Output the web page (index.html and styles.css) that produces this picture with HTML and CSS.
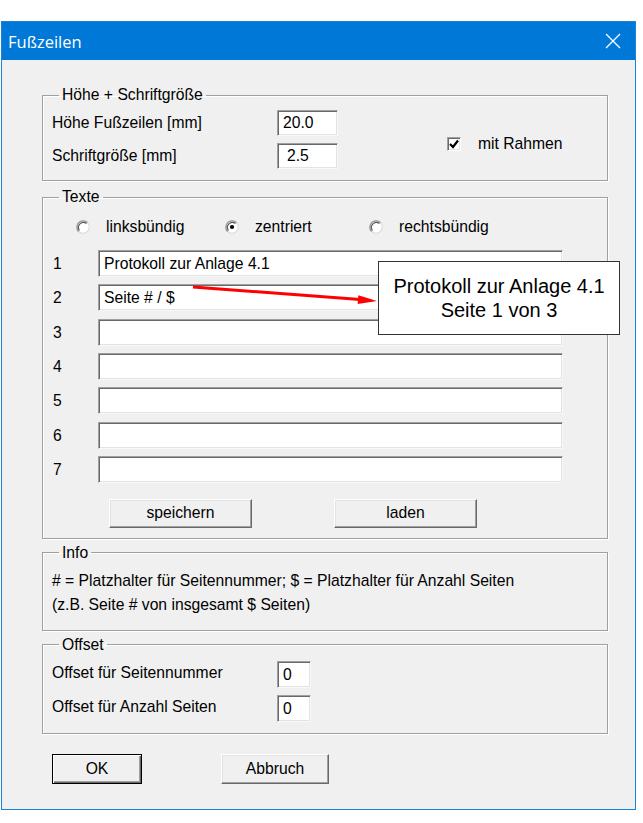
FILE: index.html
```html
<!DOCTYPE html>
<html lang="de">
<head>
<meta charset="utf-8">
<title>Fußzeilen</title>
<link rel="stylesheet" href="styles.css">
</head>
<body>
<div class="window">
  <div class="titlebar">
    <span class="title">Fußzeilen</span>
    <svg class="close" width="16" height="16" viewBox="0 0 16 16"><path d="M1 1 L15 15 M15 1 L1 15" stroke="#fff" stroke-width="1.3" fill="none"/></svg>
  </div>
  <div class="client">
    <fieldset class="group g-size">
      <legend>Höhe + Schriftgröße</legend>
      <div class="size-grid">
        <span class="lbl">Höhe Fußzeilen [mm]</span>
        <div class="field w61">20.0</div>
        <div class="check">
          <span class="cbox"><svg width="10" height="10" viewBox="0 0 10 10"><path d="M1 5 L4 8 L9 1.5" stroke="#000" stroke-width="2.2" fill="none"/></svg></span>
          <span>mit Rahmen</span>
        </div>
        <span class="lbl">Schriftgröße [mm]</span>
        <div class="field w61 indent">2.5</div>
      </div>
    </fieldset>

    <fieldset class="group g-texts">
      <legend>Texte</legend>
      <div class="radios">
        <div class="radio"><svg width="14" height="14" viewBox="0 0 14 14"><circle cx="7" cy="7" r="6.3" fill="#fff" stroke="#dcdcdc" stroke-width="1.2"/><path d="M2.55 11.45 A6.3 6.3 0 0 1 11.45 2.55" stroke="#9a9a9a" fill="none" stroke-width="1.4"/><path d="M3.5 10.5 A5 5 0 0 1 10.5 3.5" stroke="#555" fill="none" stroke-width="1.1"/></svg><span>linksbündig</span></div>
        <div class="radio"><svg width="14" height="14" viewBox="0 0 14 14"><circle cx="7" cy="7" r="6.3" fill="#fff" stroke="#dcdcdc" stroke-width="1.2"/><path d="M2.55 11.45 A6.3 6.3 0 0 1 11.45 2.55" stroke="#9a9a9a" fill="none" stroke-width="1.4"/><path d="M3.5 10.5 A5 5 0 0 1 10.5 3.5" stroke="#555" fill="none" stroke-width="1.1"/><circle cx="7" cy="7" r="2.1" fill="#000"/></svg><span>zentriert</span></div>
        <div class="radio"><svg width="14" height="14" viewBox="0 0 14 14"><circle cx="7" cy="7" r="6.3" fill="#fff" stroke="#dcdcdc" stroke-width="1.2"/><path d="M2.55 11.45 A6.3 6.3 0 0 1 11.45 2.55" stroke="#9a9a9a" fill="none" stroke-width="1.4"/><path d="M3.5 10.5 A5 5 0 0 1 10.5 3.5" stroke="#555" fill="none" stroke-width="1.1"/></svg><span>rechtsbündig</span></div>
      </div>
      <div class="rows">
        <span class="num">1</span><div class="field">Protokoll zur Anlage 4.1</div>
        <span class="num">2</span><div class="field">Seite # / $</div>
        <span class="num">3</span><div class="field"></div>
        <span class="num">4</span><div class="field"></div>
        <span class="num">5</span><div class="field"></div>
        <span class="num">6</span><div class="field"></div>
        <span class="num">7</span><div class="field"></div>
      </div>
      <div class="btnrow">
        <button class="btn wide">speichern</button>
        <button class="btn wide">laden</button>
      </div>
    </fieldset>

    <fieldset class="group g-info">
      <legend>Info</legend>
      <p class="info">#&nbsp;= Platzhalter für Seitennummer; $ = Platzhalter für Anzahl Seiten</p>
      <p class="info">(z.B. Seite # von insgesamt $ Seiten)</p>
    </fieldset>

    <fieldset class="group g-offset">
      <legend>Offset</legend>
      <div class="offset-grid">
        <span class="lbl">Offset für Seitennummer</span>
        <div class="field">0</div>
        <span class="lbl">Offset für Anzahl Seiten</span>
        <div class="field">0</div>
      </div>
    </fieldset>

    <div class="actions">
      <button class="btn default ok">OK</button>
      <button class="btn cancel">Abbruch</button>
    </div>
  </div>

  <svg class="arrow" width="192" height="24" viewBox="0 0 192 24"><line x1="3" y1="3" x2="170" y2="15.6" stroke="#f00" stroke-width="3"/><polygon points="187,17 168.3,11.2 167.7,20" fill="#f00"/></svg>
  <div class="callout">
    <span>Protokoll zur Anlage 4.1</span>
    <span>Seite 1 von 3</span>
  </div>
</div>
</body>
</html>
```
FILE: styles.css
```css
* { box-sizing: border-box; }
html, body { margin: 0; padding: 0; background: #fff; }
body {
  font-family: "Liberation Sans", Arial, sans-serif;
  font-size: 15.7px;
  color: #000;
}
.window {
  position: relative;
  margin: 21px 0 0 1px;
  width: 635px;
  height: 789px;
  border: 1px solid #1883d7;
  background: #f0f0f0;
  display: flex;
  flex-direction: column;
}
.titlebar {
  height: 38px;
  flex: none;
  background: #0078d7;
  color: #fff;
  display: flex;
  align-items: center;
  justify-content: space-between;
  padding: 0 14px 0 6px;
}
.title {
  font-family: "Open Sans", "Noto Sans", sans-serif;
  font-size: 16.5px;
}
.client {
  flex: 1;
  padding: 0 27px 0 40px;
}
.group {
  margin: 0;
  padding: 0 0 0 9px;
  min-width: 0;
  border: 1px solid #a0a0a0;
  box-shadow: inset 1px 1px #fff, 1px 1px #fff;
}
.group legend {
  margin-left: 7px;
  padding: 0 3px;
  line-height: 18px;
  height: 18px;
}
.g-size { margin-top: 26px; padding-top: 6px; padding-bottom: 11px; }
.g-texts { margin-top: 7px; padding-top: 11px; padding-bottom: 10px; }
.g-info { margin-top: 5px; padding-top: 7px; padding-bottom: 13px; }
.g-offset { margin-top: 5px; padding-top: 7px; padding-bottom: 11px; }

.field {
  height: 27px;
  background: #fff;
  border: 1px solid;
  border-color: #a0a0a0 #f8f8f8 #f8f8f8 #a0a0a0;
  box-shadow: inset 1px 1px #696969, inset -1px -1px #e3e3e3;
  padding: 0 5px;
  line-height: 25px;
  white-space: nowrap;
  overflow: hidden;
}
.lbl { line-height: 26px; }

.size-grid {
  display: grid;
  grid-template-columns: 225px 61px 1fr;
  grid-template-rows: 26px 26px;
  row-gap: 7px;
}
.size-grid .field { height: 26px; line-height: 24px; }
.size-grid .indent { padding-left: 9px; }
.check {
  grid-column: 3;
  grid-row: 1 / span 2;
  align-self: center;
  display: flex;
  align-items: center;
  gap: 17px;
  margin-left: 109px;
  margin-top: 9px;
}
.cbox {
  width: 14px;
  height: 14px;
  background: #fff;
  border: 1px solid;
  border-color: #a0a0a0 #fff #fff #a0a0a0;
  box-shadow: inset 1px 1px #696969, inset -1px -1px #e3e3e3;
  display: flex;
  align-items: center;
  justify-content: center;
}

.radios {
  display: grid;
  grid-template-columns: 149px 144px auto;
  padding-left: 24px;
  height: 20px;
  align-items: center;
}
.radio {
  display: flex;
  align-items: center;
  gap: 16px;
}
.radio svg { display: block; }

.rows {
  margin-top: 13px;
  display: grid;
  grid-template-columns: 46px 465px;
  grid-auto-rows: 27px;
  row-gap: 7.33px;
}
.num { line-height: 27px; padding-left: 1px; }

.btnrow {
  margin-top: 16px;
  padding-left: 57px;
  display: flex;
  gap: 82px;
}
.btn {
  font-family: "Liberation Sans", Arial, sans-serif;
  font-size: 15.7px;
  color: #000;
  height: 29px;
  background: #f0f0f0;
  border: 1px solid;
  border-color: #fff #696969 #696969 #fff;
  box-shadow: inset -1px -1px #a0a0a0, inset 1px 1px #e3e3e3;
  padding: 0;
}
.btn.wide { width: 143px; }

.info { margin: 0; line-height: 24px; }

.offset-grid {
  display: grid;
  grid-template-columns: 225px 34px;
  grid-auto-rows: 27px;
  row-gap: 7px;
}
.offset-grid .lbl { line-height: 24px; }

.actions {
  margin-top: 20px;
  padding-left: 10px;
  display: flex;
  gap: 79px;
}
.btn.ok { width: 90px; height: 30px; }
.btn.cancel { width: 108px; height: 30px; }
.btn.default {
  border: 1px solid #000;
  box-shadow: inset 1px 1px #fff, inset -1px -1px #696969, inset -2px -2px #a0a0a0;
}

.arrow {
  position: absolute;
  left: 188px;
  top: 262px;
}
.callout {
  position: absolute;
  left: 376px;
  top: 239px;
  width: 242px;
  height: 74px;
  background: #fff;
  border: 1px solid #333;
  display: flex;
  flex-direction: column;
  align-items: center;
  justify-content: center;
  font-size: 20px;
  line-height: 24px;
}
```
